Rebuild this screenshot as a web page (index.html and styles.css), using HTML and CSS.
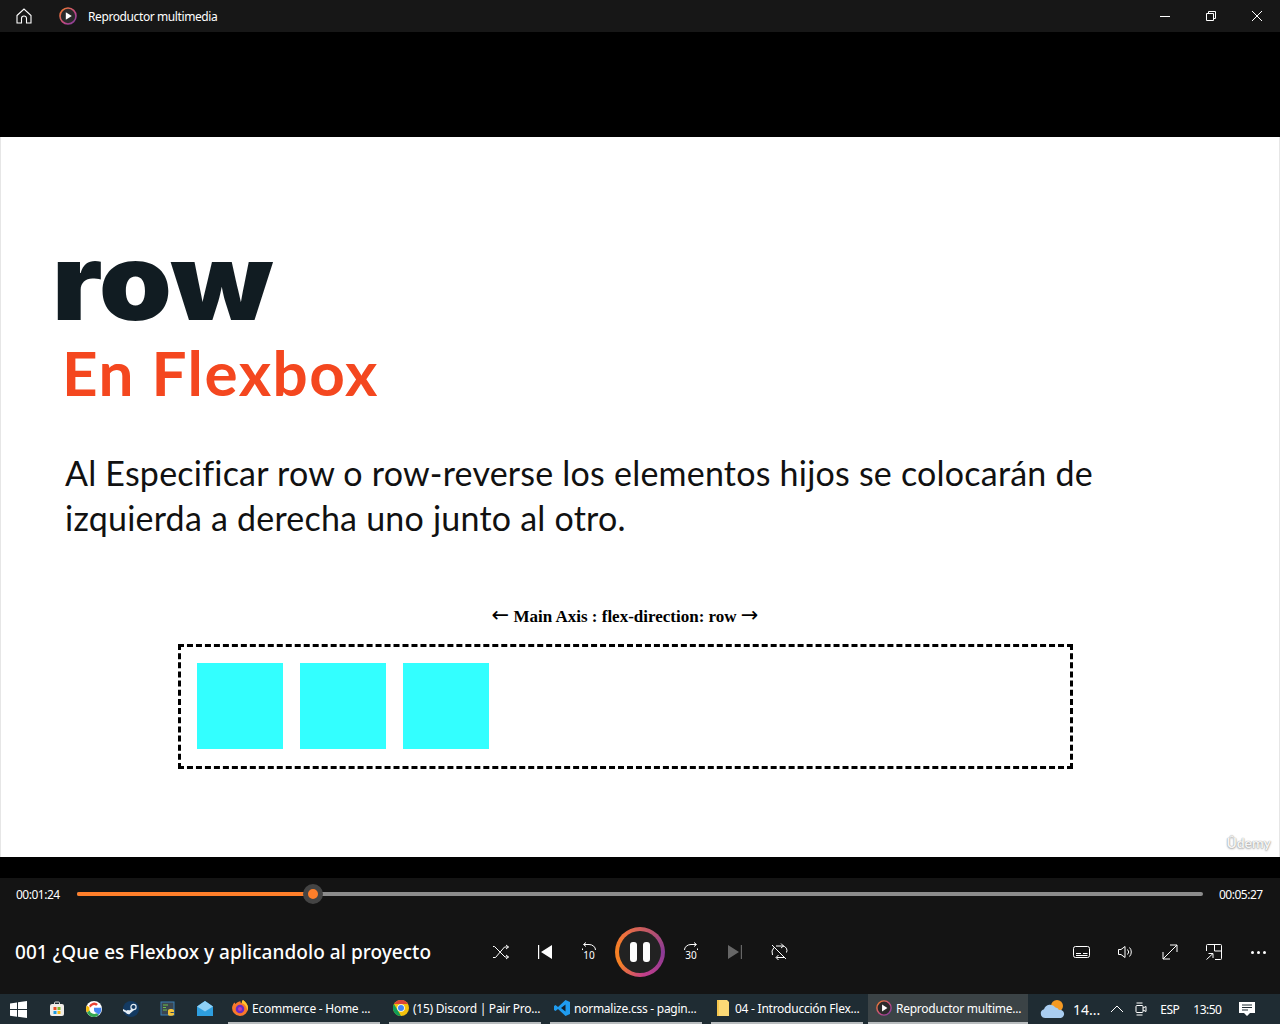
FILE: index.html
```html
<!DOCTYPE html>
<html lang="es">
<head>
    <meta charset="UTF-8">
    <title>Reproductor multimedia</title>
    <link rel="stylesheet" href="styles.css">
</head>
<body>
    <!-- barra de titulo -->
    <header class="titlebar">
        <svg class="home-icon" width="16" height="16" viewBox="0 0 16 16" fill="none" stroke="#fff" stroke-width="1.1"><path d="M1 7.500 8 1l7 6.500V15h-4.500v-4.500a2.500 2.500 0 0 0-5 0V15H1z"/></svg>
        <svg class="app-icon" width="18" height="18" viewBox="0 0 18 18"><defs><linearGradient id="ringSmall" x1="0" y1="0" x2="1" y2="1"><stop offset="0" stop-color="#f58025"/><stop offset=".6" stop-color="#c0478a"/><stop offset="1" stop-color="#7a3d9c"/></linearGradient></defs><circle cx="9" cy="9" r="8" fill="#2a2a2a" stroke="url(#ringSmall)" stroke-width="1.600"/><path d="M6.800 5.200 12.800 9l-6 3.800z" fill="#fff"/></svg>
        <span class="app-name">Reproductor multimedia</span>
        <div class="window-buttons">
            <svg width="46" height="32" viewBox="0 0 46 32" stroke="#fff" fill="none"><path d="M18 16.500h10"/></svg>
            <svg width="46" height="32" viewBox="0 0 46 32" stroke="#fff" fill="none"><path d="M18.500 13.500h7v7h-7zM20.500 13.500v-2h7v7h-2"/></svg>
            <svg width="46" height="32" viewBox="0 0 46 32" stroke="#fff" fill="none"><path d="M18 11l10 10M28 11 18 21"/></svg>
        </div>
    </header>

    <main class="video">
        <section class="slide">
            <h1 class="slide-title">row</h1>
            <h2 class="slide-subtitle">En Flexbox</h2>
            <p class="slide-text">Al Especificar row o row-reverse los elementos hijos se colocarán de izquierda a derecha uno junto al otro.</p>
            <div class="axis-label"><span class="arrow">←</span> Main Axis : flex-direction: row <span class="arrow">→</span></div>
            <div class="flex-demo">
                <div class="flex-item"></div>
                <div class="flex-item"></div>
                <div class="flex-item"></div>
            </div>
            <span class="watermark">Ûdemy</span>
        </section>
    </main>

    <section class="controls">
        <div class="progress-row">
            <span class="time">00:01:24</span>
            <div class="track">
                <div class="track-done"></div>
                <div class="thumb"></div>
            </div>
            <span class="time">00:05:27</span>
        </div>
        <div class="player-row">
            <div class="track-name">001 ¿Que es Flexbox y aplicandolo al proyecto</div>
            <div class="buttons">
                <button class="btn"><svg width="20" height="20" viewBox="0 0 20 20" fill="none" stroke="#fff"><path d="M2 4.500h1.500L14 15h3.500M2 15.500h2.500L13.500 5h4M15 3l2.500 2L15 7M15 13l2.500 2-2.500 2"/></svg></button>
                <button class="btn"><svg width="20" height="20" viewBox="0 0 20 20" fill="#fff"><path d="M3 3h1.200v14H3zM17 3v14L6 10z"/></svg></button>
                <button class="btn"><svg class="skip" width="20" height="20" viewBox="0 0 20 20" fill="none" stroke="#fff"><path d="M5 2.500h5a6.500 5.500 0 0 1 6.500 5.500M7 .5 4.500 2.500 7 4.500M3.500 8V6.500"/><text x="10" y="17" class="skip-num">10</text></svg></button>
                <button class="btn-pause"><span class="pause-bar"></span><span class="pause-bar"></span></button>
                <button class="btn"><svg class="skip" width="20" height="20" viewBox="0 0 20 20" fill="none" stroke="#fff"><path d="M15 2.500h-5a6.500 5.500 0 0 0-6.500 5.500M13 .5l2.500 2-2.500 2M16.500 8V6.500"/><text x="10" y="17" class="skip-num">30</text></svg></button>
                <button class="btn"><svg width="20" height="20" viewBox="0 0 20 20" fill="#666"><path d="M3 3v14l11-7zM15.800 3H17v14h-1.200z"/></svg></button>
                <button class="btn"><svg width="20" height="20" viewBox="0 0 20 20" fill="none" stroke="#fff"><path d="M3 3l14 14M5 5.500A7 7 0 0 0 3.500 13M7 4h6.500a4.500 4.500 0 0 1 4 6.500M15 15.500H7.500M12 1.500 14.500 4 12 6M9.500 13 7 15.500 9.500 18"/></svg></button>
            </div>
            <div class="buttons buttons-right">
                <button class="btn"><svg width="18" height="14" viewBox="0 0 18 14" fill="none" stroke="#fff"><rect x=".5" y="1.500" width="16" height="11" rx="2"/><path d="M3 8.500h5M10 8.500h4.500M3 10.500h11.500"/></svg></button>
                <button class="btn speaker"><svg width="16" height="14" viewBox="0 0 16 14" fill="none" stroke="#fff"><path d="M1.500 4.500h2.500L8 1.500v11l-4-3H1.500zM10.500 4.500a3.500 3.500 0 0 1 0 5M12.500 2.500a6.500 6.500 0 0 1 0 9"/></svg></button>
                <button class="btn"><svg width="16" height="16" viewBox="0 0 16 16" fill="none" stroke="#fff"><path d="M1 15 15 1M8 1h7v7M1 8v7h7"/></svg></button>
                <button class="btn"><svg width="16" height="16" viewBox="0 0 16 16" fill="none" stroke="#fff"><path d="M.5 7V1.500a1 1 0 0 1 1-1h13a1 1 0 0 1 1 1v13a1 1 0 0 1-1 1H9M8.500.5V7h7M.5 15.500 7 9.500M2.500 9.500H7V14"/></svg></button>
                <button class="btn more"><span></span><span></span><span></span></button>
            </div>
        </div>
    </section>

    <footer class="taskbar">
        <svg class="win-logo" width="17" height="17" viewBox="0 0 17 17" fill="#fff"><path d="M0 2.400 7 1.400V8H0zM8 1.300 17 0v8H8zM0 9h7v6.700L0 14.700zM8 9h9v8l-9-1.300z"/></svg>
        <div class="pinned">
            <svg width="16" height="16" viewBox="0 0 16 16"><path d="M5.500 3V2a1 1 0 0 1 1-1h3a1 1 0 0 1 1 1v1" fill="none" stroke="#ddd"/><rect x="1" y="3" width="14" height="12" rx="2" fill="#f0ede8"/><path fill="#e74c25" d="M4.500 6h3v3h-3z"/><path fill="#7cb82f" d="M8.500 6h3v3h-3z"/><path fill="#1e9be0" d="M4.500 10h3v3h-3z"/><path fill="#f8bb14" d="M8.500 10h3v3h-3z"/></svg>
            <svg width="16" height="16" viewBox="0 0 16 16"><circle cx="8" cy="8" r="8" fill="#fff"/><path d="M8 6.700h7.200A7.300 7.300 0 0 1 8 15.300a5 5 0 0 0 3.500-3.300A3.500 3.500 0 0 1 8 9.300z" fill="#4285f4"/><path d="M3 5a5.600 5.600 0 0 1 9-2l-1.800 1.800A3.500 3.500 0 0 0 4.800 6.500z" fill="#ea4335"/><path d="M1 4.500 3.600 6.500a5 5 0 0 0 0 3L1 11.500a7.500 7.500 0 0 1 0-7z" fill="#fbbc05"/><path d="M1 11.500 3.600 9.500A4.700 4.700 0 0 0 10.500 12.300l2.300 1.700A7.500 7.500 0 0 1 1 11.500z" fill="#34a853"/></svg>
            <svg width="16" height="16" viewBox="0 0 16 16"><circle cx="8" cy="8" r="8" fill="#133a62"/><circle cx="10.500" cy="6" r="2.600" fill="none" stroke="#e6eef5" stroke-width="1.200"/><circle cx="5" cy="11" r="1.900" fill="#e6eef5"/><path d="M0 8l5 2.500 4-3 2 1.500-5 4.500L0 10z" fill="#e6eef5"/></svg>
            <svg width="16" height="16" viewBox="0 0 16 16"><rect x="1" y="1" width="13" height="13" fill="#3b4650" stroke="#3a7fb5"/><path d="M3 4h5M3 6.500h3M3 9h4" stroke="#6fbf4a"/><path d="M8 9.500c0-2 6-2 6 0v1.500H10.500v1H14v1.500c0 1.500-6 2-6 0z" fill="#f2c33a"/></svg>
            <svg width="16" height="16" viewBox="0 0 16 16"><path d="M0 5.500 8 0l8 5.500V15H0z" fill="#2e9fe0"/><path d="M0 5.500 8 10.500l8-5L8 0z" fill="#8fd0f5"/></svg>
        </div>
        <div class="tasks">
            <div class="task">
                <svg width="16" height="16" viewBox="0 0 16 16"><path d="M8 16A7.800 7.800 0 0 1 .3 6.500C1 4 2 3 2.500 2.500L3.500 4C5 2 7 1.500 8.500 1 8 2.500 9 3 10 3.200 9.500 2 10 1 11 0c3 2 5 5 5 8a8 8 0 0 1-8 8z" fill="#f9782b"/><path d="M11 0c3 2 5 5 5 8 0 1-.2 2-.6 3C15 7 13 4 10 3.200 9.500 2 10 1 11 0z" fill="#ffc52e"/><circle cx="8" cy="9" r="4.300" fill="#6a2bc4"/><circle cx="8" cy="9" r="2" fill="#c13ab0"/></svg>
                <span>Ecommerce - Home ...</span>
            </div>
            <div class="task">
                <svg width="16" height="16" viewBox="0 0 16 16"><circle cx="8" cy="8" r="8" fill="#f4c20d"/><path d="M1 4a8 8 0 0 1 14 0H8z" fill="#db4437"/><path d="M1 4l3.500 6L8 16a8 8 0 0 1-7-12z" fill="#0f9d58"/><circle cx="8" cy="8" r="3.800" fill="#fff"/><circle cx="8" cy="8" r="3" fill="#4285f4"/></svg>
                <span>(15) Discord | Pair Pro...</span>
            </div>
            <div class="task">
                <svg width="16" height="16" viewBox="0 0 16 16"><path d="M11.500 0 16 2v12l-4.500 2L4 9l-2.500 2L0 10V6l1.500-1L4 7z" fill="#1f9cf0"/><path d="M11.500 4.500 7 8l4.500 3.500z" fill="#111f2a"/></svg>
                <span>normalize.css - pagin...</span>
            </div>
            <div class="task">
                <svg width="16" height="16" viewBox="0 0 16 16"><path d="M2 0h10l2 2v14H2z" fill="#fbd976"/><path d="M2 0h2v16H2z" fill="#f5c64d"/></svg>
                <span>04 - Introducción Flex...</span>
            </div>
            <div class="task task-active">
                <svg width="16" height="16" viewBox="0 0 18 18"><circle cx="9" cy="9" r="8" fill="#2a2a2a" stroke="url(#ringSmall)" stroke-width="1.600"/><path d="M6.800 5.200 12.800 9l-6 3.800z" fill="#fff"/></svg>
                <span>Reproductor multime...</span>
            </div>
        </div>
        <div class="tray">
            <svg class="weather" width="26" height="22" viewBox="0 0 26 22"><circle cx="17" cy="8" r="6" fill="#f59a23"/><path d="M5 20a4.500 4.500 0 0 1-1-8.800A6.500 6.500 0 0 1 15.500 9.500a4 4 0 0 1 3.500 2.500 4 4 0 0 1 2 8z" fill="#a9cdf0"/></svg>
            <span class="temp">14...</span>
            <svg class="caret" width="14" height="8" viewBox="0 0 14 8" fill="none" stroke="#fff"><path d="M1 7l6-6 6 6"/></svg>
            <svg class="meet" width="12" height="16" viewBox="0 0 12 16" fill="none" stroke="#fff"><path d="M1.500 2h6M1.500 14h6M1 5.500a1 1 0 0 1 1-1h5a1 1 0 0 1 1 1v5a1 1 0 0 1-1 1H2a1 1 0 0 1-1-1zM8 7l3-1.500v5L8 9"/></svg>
            <span class="lang">ESP</span>
            <span class="clock">13:50</span>
            <svg class="notif" width="16" height="16" viewBox="0 0 16 16" fill="#fff"><path d="M0 1h16v11h-5l-3 3-3-3H0z"/><path d="M3 4h10M3 6.500h10M3 9h6" stroke="#1f2c33"/></svg>
        </div>
    </footer>
</body>
</html>
```

FILE: styles.css
```css
* {
    box-sizing: border-box;
}
body {
    margin: 0;
    width: 1280px;
    height: 1024px;
    overflow: hidden;
    background: #000;
    font-family: "Noto Sans", sans-serif;
    display: flex;
    flex-direction: column;
}

/* barra de titulo */
.titlebar {
    height: 32px;
    background: #171717;
    color: #fff;
    display: flex;
    align-items: center;
    font-size: 12px;
}
.home-icon {
    margin-left: 16px;
}
.app-icon {
    margin-left: 27px;
}
.app-name {
    margin-left: 11px;
    letter-spacing: -0.4px;
}
.window-buttons {
    margin-left: auto;
    display: flex;
    height: 32px;
}

/* video */
.video {
    flex: 1;
    padding-top: 105px;
    padding-bottom: 21px;
}
.slide {
    position: relative;
    height: 720px;
    background: #fff;
    border-left: 1px solid #e6e6e6;
    border-right: 1px solid #e6e6e6;
    padding: 95px 0 0 55px;
    overflow: hidden;
}
.slide-title {
    margin: 0 0 0 -4px;
    font-family: Inter, sans-serif;
    font-weight: 900;
    font-size: 106px;
    line-height: 100px;
    color: #111c22;
    transform: scaleX(1.1);
    transform-origin: left;
}
.slide-subtitle {
    margin: 4px 0 0 6px;
    font-family: Lato, sans-serif;
    font-weight: 700;
    font-size: 62px;
    line-height: 72px;
    letter-spacing: 1.5px;
    color: #f4471f;
}
.slide-text {
    margin: 42px 0 0 9px;
    width: 1060px;
    font-family: Lato, sans-serif;
    font-size: 34px;
    line-height: 45px;
    letter-spacing: 0.22px;
    color: #111;
}
.axis-label {
    margin: 67px 0 0 0;
    width: 1138px;
    text-align: center;
    font-family: "Liberation Serif", serif;
    font-weight: 700;
    font-size: 17px;
    line-height: 20px;
    color: #000;
}
.arrow {
    font-family: "DejaVu Sans", sans-serif;
    font-weight: 400;
    font-size: 21px;
    line-height: 0;
}
.flex-demo {
    margin: 17px 0 0 122px;
    width: 895px;
    height: 125px;
    border: 3px dashed #000;
    padding: 16px;
    display: flex;
    gap: 17px;
}
.flex-item {
    width: 86px;
    height: 86px;
    background: #33ffff;
}
.watermark {
    position: absolute;
    right: 8px;
    bottom: 6px;
    font-family: Lato, sans-serif;
    font-weight: 700;
    font-size: 14px;
    color: #f4f4f4;
    text-shadow: 0 0 1px #888, 0 1px 2px #aaa;
}

/* controles */
.controls {
    height: 116px;
    background: #141414;
    color: #fff;
}
.progress-row {
    height: 32px;
    display: flex;
    align-items: center;
    padding: 0 16px;
    font-size: 12px;
}
.time {
    width: 61px;
    letter-spacing: -0.5px;
}
.progress-row .time:last-child {
    width: auto;
    margin-left: 16px;
}
.track {
    position: relative;
    width: 1126px;
    height: 4px;
    background: #8c8c8c;
    border-radius: 2px;
}
.track-done {
    width: 236px;
    height: 4px;
    background: #ff7f2a;
    border-radius: 2px;
}
.thumb {
    position: absolute;
    left: 226px;
    top: -8px;
    width: 20px;
    height: 20px;
    border-radius: 50%;
    background: #ff7f2a;
    border: 5px solid #444;
}
.player-row {
    margin-top: 17px;
    height: 50px;
    display: grid;
    grid-template-columns: 1fr auto 1fr;
    align-items: center;
}
.track-name {
    padding-left: 15px;
    font-size: 19px;
    font-weight: 500;
    letter-spacing: 0.05px;
    white-space: nowrap;
}
.buttons {
    display: flex;
    align-items: center;
}
.buttons-right {
    justify-content: flex-end;
}
.btn {
    width: 44px;
    height: 44px;
    padding: 0;
    border: none;
    background: none;
    display: flex;
    align-items: center;
    justify-content: center;
}
.skip-num {
    font-family: "Noto Sans", sans-serif;
    font-size: 10px;
    text-anchor: middle;
    fill: #fff;
    stroke: none;
}
.speaker svg {
    margin-right: 2px;
}
.btn-pause {
    width: 50px;
    height: 50px;
    margin: 0 4px;
    padding: 0;
    border: 4px solid transparent;
    border-radius: 50%;
    background: linear-gradient(#222, #222) padding-box, conic-gradient(from 280deg, #f58025, #ee7040 40deg, #8a3a96 170deg, #c23f8b 250deg, #f58025 320deg) border-box;
    display: flex;
    align-items: center;
    justify-content: center;
    gap: 6px;
}
.pause-bar {
    width: 7px;
    height: 20px;
    background: #fff;
    border-radius: 3px;
}
.more {
    gap: 3px;
}
.more span {
    width: 3px;
    height: 3px;
    border-radius: 50%;
    background: #fff;
}

/* barra de tareas */
.taskbar {
    height: 30px;
    background: #1f2c33;
    color: #fff;
    display: flex;
    align-items: center;
    font-size: 12px;
}
.taskbar svg {
    flex-shrink: 0;
}
.win-logo {
    margin-left: 10px;
}
.pinned {
    margin-left: 22px;
    display: flex;
    gap: 21px;
    width: 177px;
    flex-shrink: 0;
}
.tasks {
    margin-left: 2px;
    display: flex;
    gap: 9px;
    height: 30px;
}
.task {
    width: 152px;
    height: 30px;
    display: flex;
    align-items: center;
    gap: 4px;
    padding-left: 4px;
    border-bottom: 2px solid #b9bdbf;
    letter-spacing: -0.25px;
    white-space: nowrap;
    overflow: hidden;
}
.task-active {
    width: 160px;
    margin-left: -4px;
    background: #3b4346;
    padding-left: 8px;
}
.tray {
    display: flex;
    align-items: center;
    margin-left: 12px;
}
.temp {
    margin-left: 7px;
    font-size: 14px;
}
.caret {
    margin-left: 10px;
}
.meet {
    margin-left: 11px;
}
.lang {
    margin-left: 13px;
    letter-spacing: -0.5px;
}
.clock {
    margin-left: 14px;
    letter-spacing: -0.5px;
}
.notif {
    margin-left: 17px;
}
```
